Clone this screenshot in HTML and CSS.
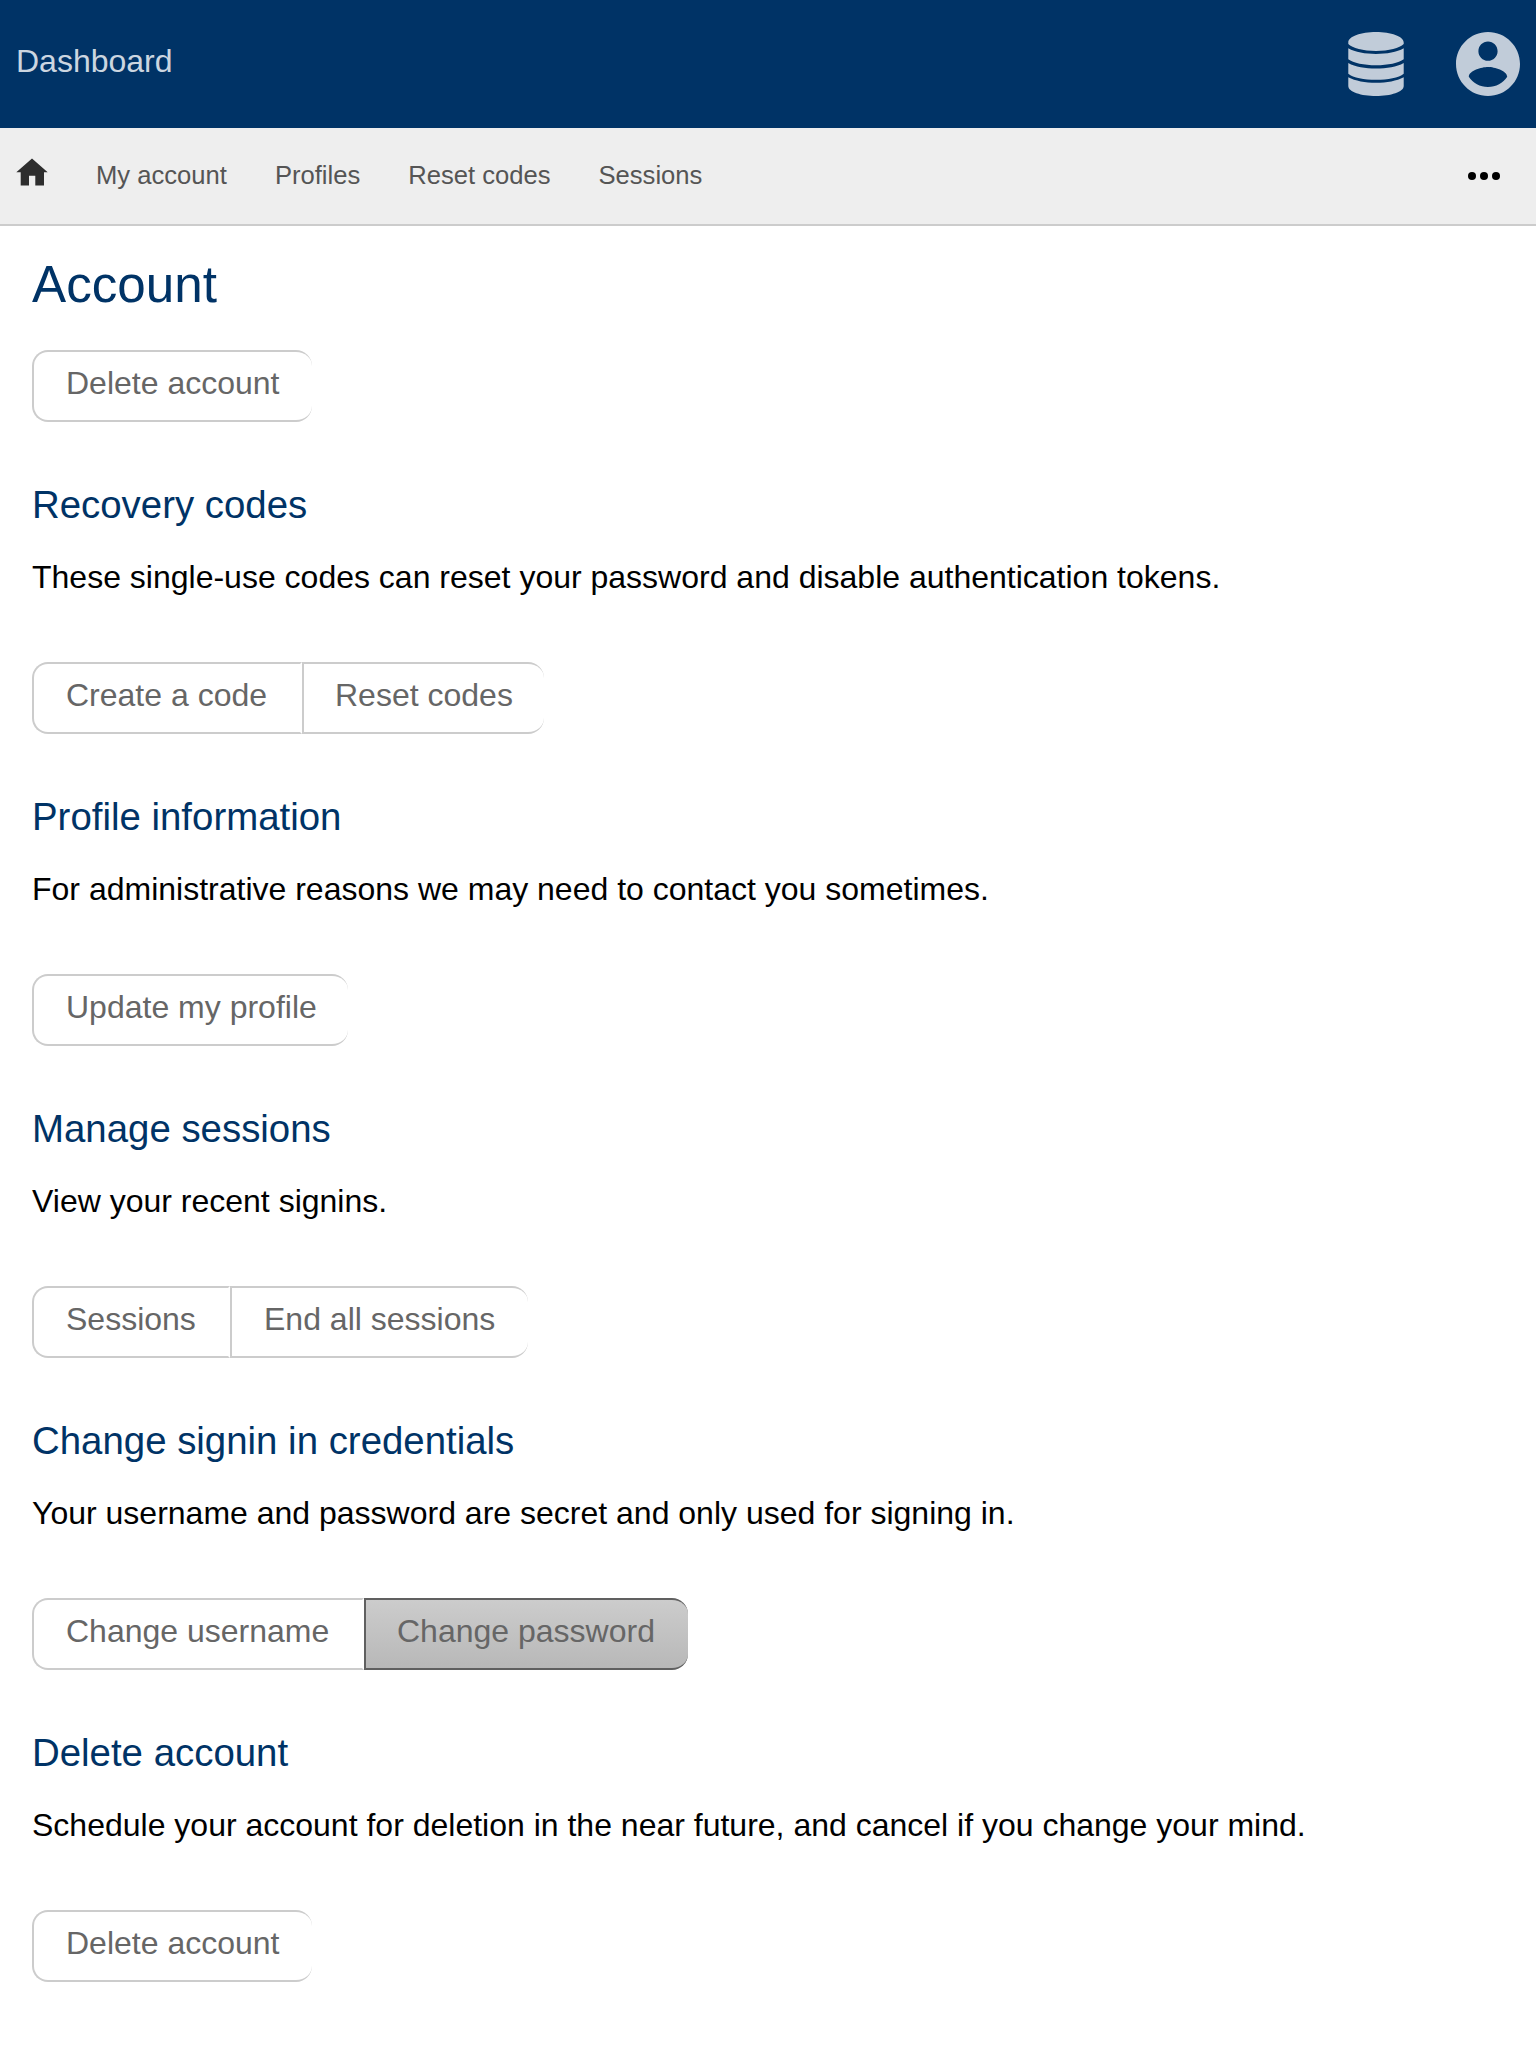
FILE: index.html
```html
<!DOCTYPE html>
<html lang="en">
<head>
<meta charset="utf-8">
<title>Account</title>
<link rel="stylesheet" href="styles.css">
</head>
<body>
<header class="header">
  <a class="title">Dashboard</a>
  <div class="menus">
    <svg class="icon-db" viewBox="-0.3 0 56.6 64" preserveAspectRatio="none"><path d="M28 0C43 0 56 4.300 56 10.500V12C52 16 41 19 28 19S4 16 0 12V10.500C0 4.300 13 0 28 0ZM0 16.300C7 20.300 17 22 28 22S49 20.300 56 16.300V27.200C51 31 40 33.200 28 33.200S5 31 0 27.200ZM0 31C7 35 17 36.500 28 36.500S49 35 56 31V41.700C51 45.700 40 47.700 28 47.700S5 45.700 0 41.700ZM0 45.300C7 49 17 50.800 28 50.800S49 49 56 45.300V54C56 60 43 64 28 64S0 60 0 54Z"/></svg>
    <svg class="icon-user" viewBox="2 2 20 20"><path d="M12 2C6.480 2 2 6.480 2 12s4.480 10 10 10 10-4.480 10-10S17.520 2 12 2zm0 3c1.660 0 3 1.340 3 3s-1.340 3-3 3-3-1.340-3-3 1.340-3 3-3zm0 14.200c-2.500 0-4.710-1.280-6-3.220.030-1.990 4-3.080 6-3.080 1.990 0 5.970 1.090 6 3.080-1.290 1.940-3.500 3.220-6 3.220z"/></svg>
  </div>
</header>
<nav class="nav">
  <svg class="icon-home" viewBox="0 0 32 28"><path d="M16 0.500L31.700 14.300H28V27.600H19.300V17.700H13V27.600H4.700V14.300H0.300Z"/></svg>
  <a>My account</a>
  <a>Profiles</a>
  <a>Reset codes</a>
  <a>Sessions</a>
  <svg class="icon-more" viewBox="0 0 32 8"><circle cx="4" cy="4" r="4"/><circle cx="16" cy="4" r="4"/><circle cx="28" cy="4" r="4"/></svg>
</nav>
<main class="content">
  <h1>Account</h1>
  <div class="buttons"><a class="delete">Delete account</a></div>
  <section>
    <h2>Recovery codes</h2>
    <p>These single-use codes can reset your password and disable authentication tokens.</p>
    <div class="buttons"><a class="create-code">Create a code</a><a class="reset-codes">Reset codes</a></div>
  </section>
  <section>
    <h2>Profile information</h2>
    <p>For administrative reasons we may need to contact you sometimes.</p>
    <div class="buttons"><a class="update">Update my profile</a></div>
  </section>
  <section>
    <h2>Manage sessions</h2>
    <p>View your recent signins.</p>
    <div class="buttons"><a class="sessions">Sessions</a><a class="end-sessions">End all sessions</a></div>
  </section>
  <section>
    <h2>Change signin in credentials</h2>
    <p>Your username and password are secret and only used for signing in.</p>
    <div class="buttons"><a class="username">Change username</a><a class="password active">Change password</a></div>
  </section>
  <section>
    <h2>Delete account</h2>
    <p>Schedule your account for deletion in the near future, and cancel if you change your mind.</p>
    <div class="buttons"><a class="delete">Delete account</a></div>
  </section>
</main>
</body>
</html>
```
FILE: styles.css
```css
* { box-sizing: border-box; }
body {
  margin: 0;
  background: #fff;
  color: #000;
  font: 32px "Liberation Sans", Arial, sans-serif;
}
.header {
  display: flex;
  justify-content: space-between;
  height: 128px;
  padding: 0 16px;
  background: #003366;
}
.title { color: #ccd6e0; line-height: 122px; }
.menus {
  display: flex;
  align-items: center;
  gap: 52px;
  fill: #c1ccd9;
}
.icon-db { width: 56px; height: 64px; }
.icon-user { width: 64px; height: 64px; }
.nav {
  display: flex;
  align-items: center;
  gap: 48px;
  height: 98px;
  padding: 0 36px 0 16px;
  background: #eee;
  border-bottom: 2px solid #ccc;
  color: #555;
  font-size: 25.6px;
}
.nav a { padding-bottom: 2px; }
.icon-home { width: 32px; height: 28px; margin-bottom: 8px; fill: #2d2d2d; }
.icon-more { width: 32px; height: 8px; margin-left: auto; fill: #000; }
.content { padding: 28px 32px 0; }
h1, h2 { margin: 0; color: #003366; font-weight: normal; }
h1 { height: 96px; font-size: 51.2px; line-height: 62px; }
section { height: 312px; padding-top: 60px; }
h2 { height: 44px; font-size: 38.4px; line-height: 46px; }
p { height: 136px; margin: 0; padding-top: 33px; line-height: 36px; white-space: nowrap; }
.buttons { display: flex; height: 72px; }
.buttons a {
  padding-left: 32px;
  border: 2px solid #ccc;
  border-right-color: transparent;
  color: #666;
  line-height: 62px;
  white-space: nowrap;
}
.buttons a:first-child { border-radius: 16px 0 0 16px; }
.buttons a:last-child { border-right: 0; border-radius: 0 16px 16px 0; }
.buttons a:only-child { border-radius: 16px; }
.buttons .active {
  border-color: #606060;
  background: linear-gradient(#ccc, #b8b8b8);
}
.buttons .delete { width: 280px; }
.buttons .create-code { width: 270px; }
.buttons .reset-codes { width: 242px; padding-left: 31px; }
.buttons .update { width: 316px; }
.buttons .sessions { width: 198px; }
.buttons .end-sessions { width: 298px; }
.buttons .username { width: 332px; }
.buttons .password { width: 324px; padding-left: 31px; }
```
